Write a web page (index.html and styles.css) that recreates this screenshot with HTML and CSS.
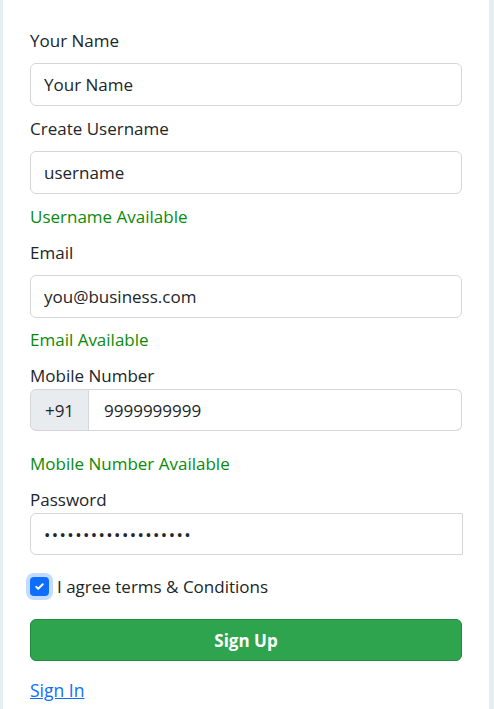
FILE: index.html
```html
<!DOCTYPE html>
<html lang="en">
<head>
<meta charset="utf-8">
<title>Sign Up</title>
<link rel="stylesheet" href="styles.css">
</head>
<body>
<main class="card">
  <form class="form">
    <label class="label gap" for="name">Your Name</label>
    <input class="control gap" id="name" type="text" value="Your Name">

    <label class="label gap" for="user">Create Username</label>
    <input class="control gap" id="user" type="text" value="username">
    <div class="status gap">Username Available</div>

    <label class="label gap" for="email">Email</label>
    <input class="control gap-sm" id="email" type="text" value="you@business.com">
    <div class="status gap">Email Available</div>

    <label class="label" for="mobile">Mobile Number</label>
    <div class="group">
      <span class="addon">+91</span>
      <input class="control group-input" id="mobile" type="text" value="9999999999">
    </div>
    <div class="status status-spaced">Mobile Number Available</div>

    <label class="label" for="pass">Password</label>
    <input class="control control-square" id="pass" type="password" value="aaaaaaaaaaaaaaaaaaa">

    <label class="check">
      <span class="box"><svg viewBox="0 0 20 20" width="13" height="13"><path d="M5 10.5l3 3 7-7" fill="none" stroke="#fff" stroke-width="3" stroke-linecap="round" stroke-linejoin="round"/></svg></span>
      <span>I agree terms &amp; Conditions</span>
    </label>

    <button class="btn" type="button">Sign Up</button>

    <a class="link" href="#">Sign In</a>
  </form>
</main>
</body>
</html>
```

FILE: styles.css
```css
* { box-sizing: border-box; }
html, body { margin: 0; padding: 0; }
body {
  background: #e4eff1;
  font-family: "Segoe UI", "Open Sans", "Noto Sans", sans-serif;
  font-size: 17px;
  color: #212529;
}
.card {
  background: #fff;
  margin: 0 5px 0 3px;
  min-height: 709px;
  padding: 27px 27px 0;
}
.form {
  display: flex;
  flex-direction: column;
  align-items: stretch;
}
.label, .status, .check, .link {
  line-height: 27px;
  height: 27px;
}
.gap { margin-bottom: 9px; }
.gap-sm { margin-bottom: 8px; }
.status { color: #0a8a0a; }
.status-spaced { margin-top: 19px; margin-bottom: 9px; }
.control {
  display: block;
  width: 100%;
  height: 43px;
  padding: 0 13px;
  font: inherit;
  color: #212529;
  border: 1px solid #d4d6da;
  border-radius: 6px;
  background: #fff;
  outline: none;
}
#email { height: 43px; }
.control-square {
  width: calc(100% + 1px);
  height: 42px;
  border-radius: 6px 0 0 6px;
  margin-bottom: 18px;
  letter-spacing: 1.4px;
}
.group {
  display: flex;
  height: 42px;
}
.addon {
  flex: 0 0 59px;
  display: flex;
  align-items: center;
  justify-content: center;
  background: #e9ecef;
  border: 1px solid #d4d6da;
  border-radius: 6px 0 0 6px;
}
.group-input {
  flex: 1;
  height: 42px;
  border-left: 0;
  padding-left: 15px;
  border-radius: 0 6px 6px 0;
}
.check {
  display: flex;
  align-items: center;
  gap: 8px;
  margin-bottom: 19px;
}
.box {
  width: 19px;
  height: 19px;
  border-radius: 4px;
  background: #0d6efd;
  display: flex;
  align-items: center;
  justify-content: center;
  box-shadow: 0 0 0 4px rgba(13, 110, 253, 0.25);
}
.btn {
  height: 42px;
  border: 1px solid #23893f;
  border-radius: 6px;
  background: #2ea44f;
  color: #fff;
  font: inherit;
  font-weight: 700;
  margin-bottom: 16px;
}
.link {
  color: #0d6efd;
  text-decoration: underline;
  align-self: flex-start;
  font-size: 17.5px;
}
```
